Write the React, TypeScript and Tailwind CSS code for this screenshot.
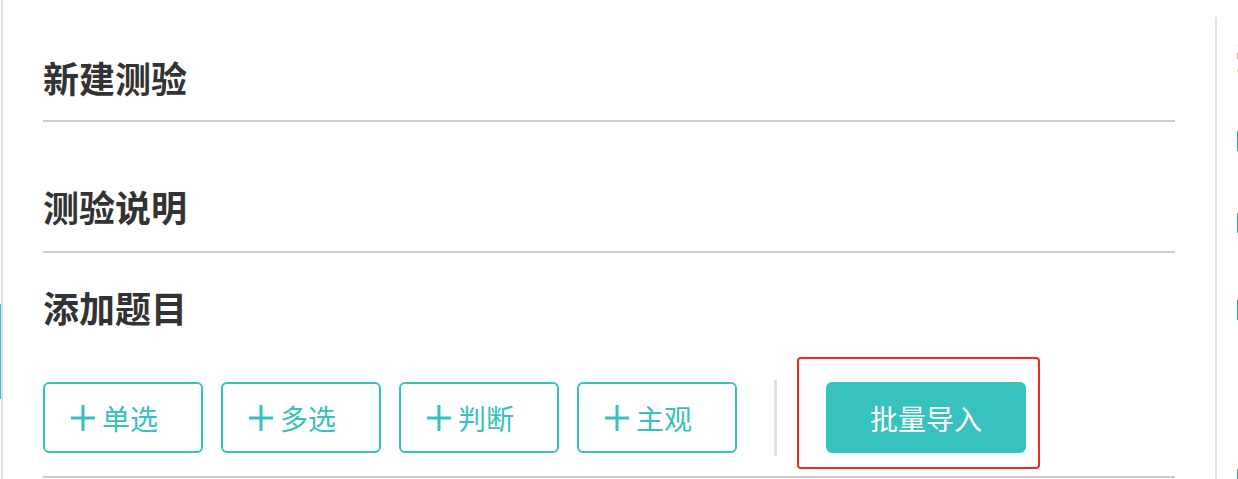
import React from "react";

const Plus = () => (
  <svg width="24" height="26" viewBox="0 0 24 26" className="shrink-0">
    <path d="M12 0v26M0 13h24" stroke="#36c1bd" strokeWidth="3" fill="none" />
  </svg>
);

const AddButton = ({ label }: { label: string }) => (
  <button className="mt-[25px] flex h-[71px] w-[160px] shrink-0 items-center gap-[7px] rounded-[6px] border-2 border-[#36c1bd] bg-white pl-[26px] text-[28px] leading-[28px] text-[#36c1bd]">
    <Plus />
    <span>{label}</span>
  </button>
);

export default function App() {
  return (
    <div
      className="flex h-[479px] w-[1238px] overflow-hidden bg-white"
      style={{ fontFamily: '"Noto Sans CJK SC", "Noto Sans", sans-serif' }}
    >
      {/* far-left teal marker */}
      <div className="flex w-[1px] shrink-0 flex-col">
        <div className="h-[304px]" />
        <div className="h-[95px] bg-[#36c1bd]" />
      </div>
      <div className="w-[2px] shrink-0 bg-[#e1e1e8]" />

      {/* main panel */}
      <div className="flex w-[1212px] shrink-0 flex-col px-10 pt-[59px]">
        <h1 className="h-[36px] text-[36px] font-bold leading-[36px] text-[#333333]">新建测验</h1>
        <div className="mt-[25px] h-[2px] bg-[#cbcbd0]" />
        <h2 className="mt-[66px] h-[36px] text-[36px] font-bold leading-[36px] text-[#333333]">测验说明</h2>
        <div className="mt-[27px] h-[2px] bg-[#cbcbd0]" />
        <h2 className="mt-[36px] h-[36px] text-[36px] font-bold leading-[36px] text-[#333333]">添加题目</h2>
        <div className="mt-[32px] flex items-start gap-[18px]">
          <AddButton label="单选" />
          <AddButton label="多选" />
          <AddButton label="判断" />
          <AddButton label="主观" />
          <div className="ml-[19px] mt-[23px] h-[76px] w-[3px] shrink-0 bg-[#e0e0e6]" />
          <div className="ml-[2px] flex rounded-[4px] border-2 border-[#f02a22] pb-[14px] pl-[27px] pr-[12px] pt-[23px]">
            <button className="flex h-[71px] w-[200px] items-center justify-center rounded-[6px] bg-[#37c2bf] text-[28px] leading-[28px] text-white">
              批量导入
            </button>
          </div>
        </div>
        <div className="mt-[7px] h-[2px] bg-[#cbcbd0]" />
      </div>

      {/* right divider */}
      <div className="flex w-[2px] shrink-0 flex-col">
        <div className="h-[17px]" />
        <div className="flex-1 bg-[#e1e1e8]" />
      </div>

      {/* right edge markers */}
      <div className="flex w-[21px] shrink-0 flex-col items-end">
        <div className="h-[45px]" />
        <div className="h-[1px] w-[1px] bg-[#fbe9b8]" />
        <div className="h-[7px]" />
        <div className="h-[6px] w-[1px] bg-[#e9a468]" />
        <div className="h-[10px]" />
        <div className="h-[3px] w-[1px] bg-[#f6cfae]" />
        <div className="h-[59px]" />
        <div className="h-[20px] w-[1px] bg-[#19aaa5]" />
        <div className="h-[62px]" />
        <div className="h-[20px] w-[1px] bg-[#19aaa5]" />
        <div className="h-[67px]" />
        <div className="h-[20px] w-[1px] bg-[#19aaa5]" />
        <div className="h-[149px]" />
        <div className="h-[10px] w-[1px] bg-[#19aaa5]" />
      </div>
    </div>
  );
}
